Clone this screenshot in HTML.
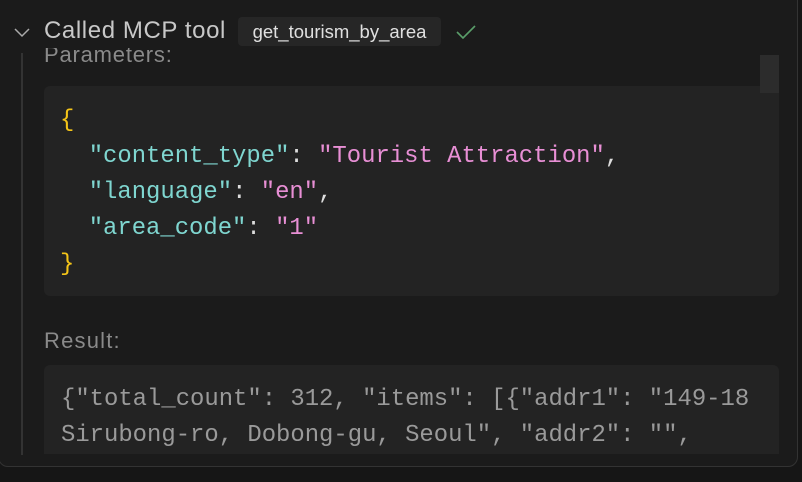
<!DOCTYPE html>
<html><head><style>
body{margin:0;width:802px;height:482px;background:#161616;overflow:hidden;font-family:"Liberation Sans",sans-serif;}
.panel{position:absolute;left:-2px;top:-10px;width:800px;height:477px;background:#1b1b1b;border:1px solid #333;border-radius:10px;box-sizing:border-box;overflow:hidden;}
.abs{position:absolute;}
.mono{font-family:"Liberation Mono",monospace;font-size:23.9px;line-height:36px;white-space:pre;}
</style></head><body>
<div class="panel"></div>
<svg class="abs" style="left:13px;top:26px" width="20" height="14"><path d="M2 3 L9 10 L16 3" stroke="#aaa" stroke-width="1.5" fill="none"/></svg>
<div class="abs" style="left:44px;top:17px;font-size:24px;color:#c8c8c8;letter-spacing:0.6px">Called MCP tool</div>
<div class="abs" style="left:238px;top:17px;width:203px;height:29px;background:#262626;border-radius:4px;color:#e0e0e0;font-size:18.5px;line-height:29px;text-align:center">get_tourism_by_area</div>
<svg class="abs" style="left:455px;top:23px" width="22" height="18"><path d="M2 9 L8 15 L20 3" stroke="#5a9e6a" stroke-width="1.6" fill="none"/></svg>
<div class="abs" style="left:21px;top:53px;width:2px;height:402px;background:#333"></div>
<div class="abs" style="left:44px;top:48px;font-size:22px;color:#8a8a8a;height:22px;overflow:hidden;line-height:26px;letter-spacing:0.8px"><span style="position:relative;top:-6px">Parameters:</span></div>
<div class="abs" style="left:44px;top:86px;width:735px;height:210px;background:#232323;border-radius:6px"></div>
<div class="abs" style="left:760px;top:55px;width:19px;height:38px;background:#2c2c2c"></div>
<div class="abs mono" style="left:60px;top:103px;color:#ddd"><span style="color:#f5c518">{</span>
  <span style="color:#7fd6d0">"content_type"</span>: <span style="color:#e88fd5">"Tourist Attraction"</span>,
  <span style="color:#7fd6d0">"language"</span>: <span style="color:#e88fd5">"en"</span>,
  <span style="color:#7fd6d0">"area_code"</span>: <span style="color:#e88fd5">"1"</span>
<span style="color:#f5c518">}</span></div>
<div class="abs" style="left:44px;top:328px;font-size:22px;color:#8a8a8a;letter-spacing:1.2px">Result:</div>
<div class="abs" style="left:44px;top:365px;width:735px;height:89px;background:#232323;border-radius:6px 6px 0 0;overflow:hidden">
<div class="abs mono" style="left:17px;top:17px;color:#9a9a9a">{"total_count": 312, "items": [{"addr1": "149-18
Sirubong-ro, Dobong-gu, Seoul", "addr2": "",</div></div>
</body></html>
